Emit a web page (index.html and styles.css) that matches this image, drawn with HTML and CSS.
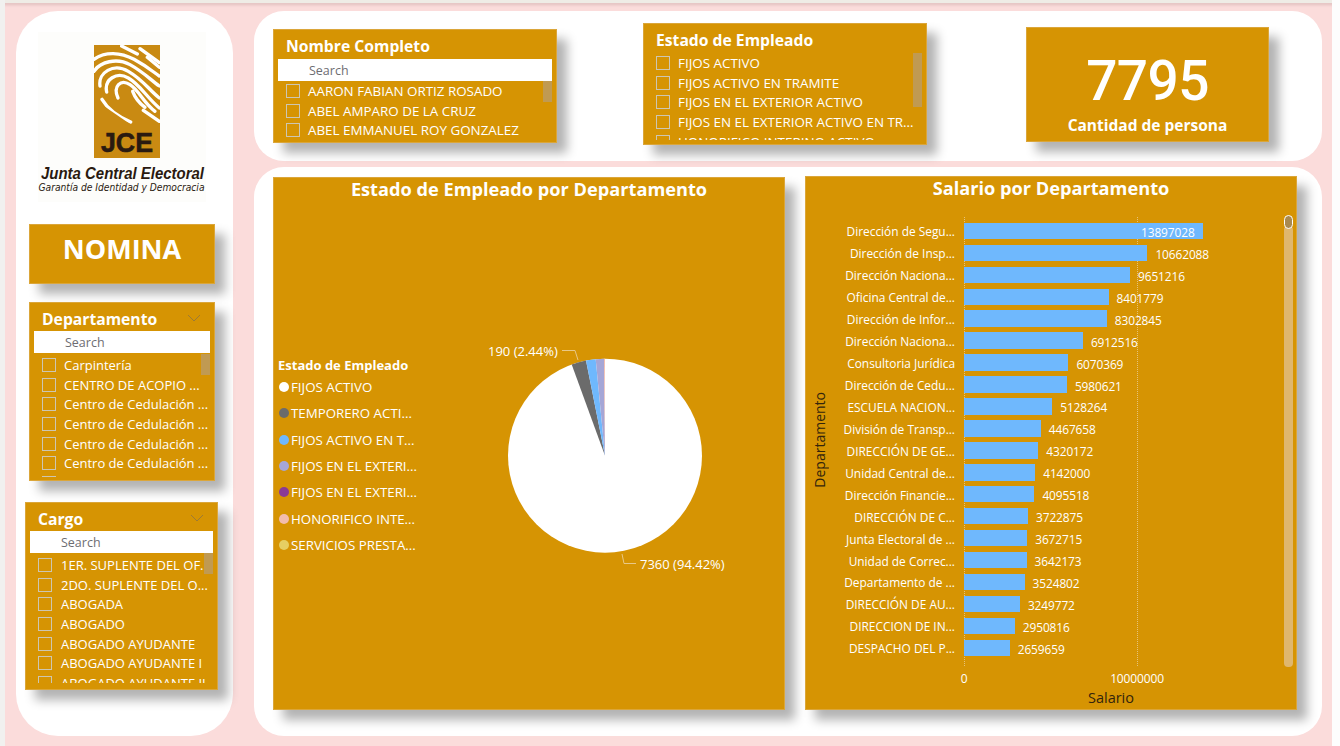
FILE: index.html
```html
<!DOCTYPE html>
<html lang="es">
<head>
    <meta charset="UTF-8">
    <title>Nomina JCE</title>
    <link rel="stylesheet" href="styles.css">
</head>
<body>
    <div class="topStrip"></div>
    <div class="page">

        <aside class="panel sidePanel">
            <svg class="logo" width="168" height="170" viewBox="0 0 168 170">
                <rect width="168" height="170" fill="#fdfdfb"/>
                <rect x="56" y="13" width="66" height="113" fill="#c98a12"/>
                <clipPath id="logoClip"><polygon points="56,13 122,13 122,92 92,92 60,70 56,60"/></clipPath>
                <g clip-path="url(#logoClip)">
                    <g transform="translate(52 10) scale(.3333)" fill="none" stroke="#fff" stroke-width="10" stroke-linecap="round">
                        <path d="M12 52C45 28 92 30 132 52S190 90 208 102"/>
                        <path d="M12 88C30 60 80 46 120 68S185 116 208 132"/>
                        <path d="M30 132C24 92 70 62 115 88S175 142 208 168"/>
                        <path d="M50 150C42 112 80 88 115 108S170 166 208 198"/>
                        <path d="M84 168C68 132 92 110 120 128S160 182 195 208"/>
                        <path d="M36 172C50 196 80 222 122 240"/>
                        <path d="M128 148C136 170 150 185 165 196"/>
                        <path d="M160 205L208 238"/>
                        <path d="M95 12L142 36"/>
                        <path d="M150 20L208 62"/>
                        <path d="M172 46L208 76"/>
                    </g>
                </g>
                <text class="logoJce" x="89" y="120" text-anchor="middle" textLength="52" lengthAdjust="spacingAndGlyphs">JCE</text>
                <text class="logoName" x="3" y="147" textLength="163" lengthAdjust="spacingAndGlyphs">Junta Central Electoral</text>
                <text class="logoTag" x="0.500" y="159" textLength="166" lengthAdjust="spacingAndGlyphs">Garantía de Identidad y Democracia</text>
            </svg>

            <div class="card nominaCard">NOMINA</div>

            <section class="card slicer deptSlicer">
                <div class="slicerHead">
                    <span class="slicerTitle">Departamento</span>
                    <svg class="chevron" width="14" height="8" viewBox="0 0 14 8"><path d="M1 1l6 6 6-6" fill="none" stroke="#9c7a35" stroke-width="1"/></svg>
                </div>
                <div class="searchBox">Search</div>
                <ul class="slicerList">
                    <li><i></i>Carpintería</li>
                    <li><i></i>CENTRO DE ACOPIO ...</li>
                    <li><i></i>Centro de Cedulación ...</li>
                    <li><i></i>Centro de Cedulación ...</li>
                    <li><i></i>Centro de Cedulación ...</li>
                    <li><i></i>Centro de Cedulación ...</li>
                    <li><i></i>Centro de Cedulación ...</li>
                </ul>
                <div class="scrollThumb"></div>
            </section>

            <section class="card slicer cargoSlicer">
                <div class="slicerHead">
                    <span class="slicerTitle">Cargo</span>
                    <svg class="chevron" width="14" height="8" viewBox="0 0 14 8"><path d="M1 1l6 6 6-6" fill="none" stroke="#9c7a35" stroke-width="1"/></svg>
                </div>
                <div class="searchBox">Search</div>
                <ul class="slicerList">
                    <li><i></i>1ER. SUPLENTE DEL OF...</li>
                    <li><i></i>2DO. SUPLENTE DEL O...</li>
                    <li><i></i>ABOGADA</li>
                    <li><i></i>ABOGADO</li>
                    <li><i></i>ABOGADO AYUDANTE</li>
                    <li><i></i>ABOGADO AYUDANTE I</li>
                    <li><i></i>ABOGADO AYUDANTE II</li>
                </ul>
                <div class="scrollThumb"></div>
            </section>
        </aside>

        <main class="mainColumn">
            <section class="panel topPanel">
                <div class="card slicer nameSlicer">
                    <div class="slicerHead">
                        <span class="slicerTitle">Nombre Completo</span>
                    </div>
                    <div class="searchBox">Search</div>
                    <ul class="slicerList">
                        <li><i></i>AARON FABIAN ORTIZ ROSADO</li>
                        <li><i></i>ABEL AMPARO DE LA CRUZ</li>
                        <li><i></i>ABEL EMMANUEL ROY GONZALEZ</li>
                    </ul>
                    <div class="scrollThumb"></div>
                </div>

                <div class="card slicer statusSlicer">
                    <div class="slicerHead">
                        <span class="slicerTitle">Estado de Empleado</span>
                    </div>
                    <ul class="slicerList">
                        <li><i></i>FIJOS ACTIVO</li>
                        <li><i></i>FIJOS ACTIVO EN TRAMITE</li>
                        <li><i></i>FIJOS EN EL EXTERIOR ACTIVO</li>
                        <li><i></i>FIJOS EN EL EXTERIOR ACTIVO EN TR...</li>
                        <li><i></i>HONORIFICO INTERINO ACTIVO</li>
                    </ul>
                    <div class="scrollThumb"></div>
                </div>

                <div class="card countCard">
                    <div class="countValue">7795</div>
                    <div class="countLabel">Cantidad de persona</div>
                </div>
            </section>

            <section class="panel bottomPanel">
                <div class="card pieCard">
                    <h2 class="chartTitle">Estado de Empleado por Departamento</h2>
                    <div class="pieBody">
                        <div class="legend">
                            <div class="legendTitle">Estado de Empleado</div>
                            <div class="legendItem"><i class="dot dotWhite"></i>FIJOS ACTIVO</div>
                            <div class="legendItem"><i class="dot dotGray"></i>TEMPORERO ACTI...</div>
                            <div class="legendItem"><i class="dot dotBlue"></i>FIJOS ACTIVO EN T...</div>
                            <div class="legendItem"><i class="dot dotLavender"></i>FIJOS EN EL EXTERI...</div>
                            <div class="legendItem"><i class="dot dotPurple"></i>FIJOS EN EL EXTERI...</div>
                            <div class="legendItem"><i class="dot dotSalmon"></i>HONORIFICO INTE...</div>
                            <div class="legendItem"><i class="dot dotYellow"></i>SERVICIOS PRESTA...</div>
                        </div>
                        <svg class="pie" width="300" height="250" viewBox="0 0 300 250">
                            <g transform="translate(145 125.7)">
                                <circle r="97" fill="#fff"/>
                                <path d="M0 0L-33.3 -91.1A97 97 0 0 1 -19 -95.1Z" fill="#6b6b6b"/>
                                <path d="M0 0L-19 -95.1A97 97 0 0 1 -9.3 -96.5Z" fill="#6fb8fd"/>
                                <path d="M0 0L-9.3 -96.5A97 97 0 0 1 -1 -97Z" fill="#a5a6d6"/>
                                <path d="M0 0L-1 -97A97 97 0 0 1 0 -97Z" fill="#f2bcae"/>
                            </g>
                            <path class="leader" d="M102 20.5H115L118 30"/>
                            <path class="leader" d="M162 224L164 233.5H176"/>
                            <text class="pieLabel" x="28" y="25.500">190 (2.44%)</text>
                            <text class="pieLabel" x="180" y="238.500">7360 (94.42%)</text>
                        </svg>
                    </div>
                </div>

                <div class="card barCard">
                    <h2 class="chartTitle">Salario por Departamento</h2>
                    <div class="axisY">Departamento</div>
                    <div class="gridLine gridZero"></div>
                    <div class="gridLine gridTen"></div>
                    <div class="barRows">
                        <div class="barRow"><span class="barName">Dirección de Segu...</span><div class="bar" style="width:239px"></div><span class="barValue insideBar">13897028</span></div>
                        <div class="barRow"><span class="barName">Dirección de Insp...</span><div class="bar" style="width:183.4px"></div><span class="barValue">10662088</span></div>
                        <div class="barRow"><span class="barName">Dirección Naciona...</span><div class="bar" style="width:166px"></div><span class="barValue">9651216</span></div>
                        <div class="barRow"><span class="barName">Oficina Central de...</span><div class="bar" style="width:144.5px"></div><span class="barValue">8401779</span></div>
                        <div class="barRow"><span class="barName">Dirección de Infor...</span><div class="bar" style="width:142.8px"></div><span class="barValue">8302845</span></div>
                        <div class="barRow"><span class="barName">Dirección Naciona...</span><div class="bar" style="width:118.9px"></div><span class="barValue">6912516</span></div>
                        <div class="barRow"><span class="barName">Consultoria Jurídica</span><div class="bar" style="width:104.4px"></div><span class="barValue">6070369</span></div>
                        <div class="barRow"><span class="barName">Dirección de Cedu...</span><div class="bar" style="width:102.9px"></div><span class="barValue">5980621</span></div>
                        <div class="barRow"><span class="barName">ESCUELA NACION...</span><div class="bar" style="width:88.2px"></div><span class="barValue">5128264</span></div>
                        <div class="barRow"><span class="barName">División de Transp...</span><div class="bar" style="width:76.8px"></div><span class="barValue">4467658</span></div>
                        <div class="barRow"><span class="barName">DIRECCIÓN DE GE...</span><div class="bar" style="width:74.3px"></div><span class="barValue">4320172</span></div>
                        <div class="barRow"><span class="barName">Unidad Central de...</span><div class="bar" style="width:71.2px"></div><span class="barValue">4142000</span></div>
                        <div class="barRow"><span class="barName">Dirección Financie...</span><div class="bar" style="width:70.4px"></div><span class="barValue">4095518</span></div>
                        <div class="barRow"><span class="barName">DIRECCIÓN DE C...</span><div class="bar" style="width:64px"></div><span class="barValue">3722875</span></div>
                        <div class="barRow"><span class="barName">Junta Electoral de ...</span><div class="bar" style="width:63.2px"></div><span class="barValue">3672715</span></div>
                        <div class="barRow"><span class="barName">Unidad de Correc...</span><div class="bar" style="width:62.6px"></div><span class="barValue">3642173</span></div>
                        <div class="barRow"><span class="barName">Departamento de ...</span><div class="bar" style="width:60.6px"></div><span class="barValue">3524802</span></div>
                        <div class="barRow"><span class="barName">DIRECCIÓN DE AU...</span><div class="bar" style="width:55.9px"></div><span class="barValue">3249772</span></div>
                        <div class="barRow"><span class="barName">DIRECCION DE IN...</span><div class="bar" style="width:50.8px"></div><span class="barValue">2950816</span></div>
                        <div class="barRow"><span class="barName">DESPACHO DEL P...</span><div class="bar" style="width:45.7px"></div><span class="barValue">2659659</span></div>
                    </div>
                    <div class="axisX">
                        <span class="tick tickZero">0</span>
                        <span class="tick tickTen">10000000</span>
                    </div>
                    <div class="axisXTitle">Salario</div>
                    <div class="chartScroll"><div class="chartHandle"></div></div>
                </div>
            </section>
        </main>
    </div>
</body>
</html>
```

FILE: styles.css
```css
* {box-sizing: border-box}
html, body {
    height: 746px;
    overflow: hidden;
}
body {
    margin: 0;
    font-family: "Open Sans", "Noto Sans", sans-serif;
    background-color: #fbdcdb;
    border-left: 5px solid #f1f1ef;
    border-right: 8px solid #fdfdfd;
    color: #fff;
}
.topStrip {
    height: 3px;
    margin: 0 -8px 0 -5px;
    background: #efece6;
    box-shadow: 0 2px 3px rgba(120,80,80,.2);
}
.page {
    display: flex;
    padding: 8px 0 0 11px;
}
.panel {
    background: #fff;
}

/* left column */
.sidePanel {
    width: 217px;
    height: 725px;
    flex: none;
    border-radius: 42px;
    padding-top: 21px;
}
.logo {
    display: block;
    margin-left: 22px;
    overflow: visible;
}
.logoJce {
    font: 800 28px "Liberation Sans", sans-serif;
    fill: #2a1a10;
    stroke: #2a1a10;
    stroke-width: .6;
}
.logoName {
    font: italic 700 16px "Liberation Sans", sans-serif;
    fill: #2a1a10;
}
.logoTag {
    font: italic 400 10.500px "DejaVu Sans", sans-serif;
    fill: #2a1a10;
}
.mainColumn {
    margin-left: 21px;
    width: 1068px;
    display: flex;
    flex-direction: column;
    gap: 6px;
}

/* gold boxes */
.card {
    background-color: #d69403;
    border: 1px solid #dba63a;
    box-shadow: 10px 10px 10px rgba(0,0,0,.3);
    flex: none;
}
.nominaCard {
    width: 186px;
    height: 60px;
    margin: 22px 0 0 13px;
    text-align: center;
    font-size: 27px;
    font-weight: 700;
    line-height: 48px;
}

/* slicers */
.slicer {
    position: relative;
    overflow: visible;
}
.slicerHead {
    display: flex;
    justify-content: space-between;
    align-items: center;
    font-size: 15.700px;
    font-weight: 700;
    line-height: 22px;
    margin-bottom: 1px;
}
.slicerTitle {
    white-space: nowrap;
}
.chevron {
    margin-top: -2px;
}
.searchBox {
    background: #fff;
    color: #6d6d72;
    font-size: 12.500px;
    line-height: 23px;
    height: 22px;
    padding-left: 31px;
}
.slicerList {
    list-style-type: none;
    margin: 0;
    padding: 0;
    overflow: hidden;
    font-size: 13px;
}
.slicerList li {
    display: flex;
    align-items: center;
    height: 19.7px;
    white-space: nowrap;
}
.slicerList i {
    width: 14px;
    height: 14px;
    flex: none;
    margin-right: 8px;
    border: 1px solid #cdc6b2;
}
.scrollThumb {
    position: absolute;
    width: 9px;
    height: 21px;
    background: #c09a52;
}
.deptSlicer {
    width: 186px;
    height: 179px;
    margin: 18px 0 0 13px;
    padding: 5px 4px 0;
}
.deptSlicer .slicerHead {
    padding: 0 9px 0 8px;
}
.deptSlicer .slicerList {
    height: 122px;
    margin-top: 2px;
    padding-left: 8px;
}
.deptSlicer .scrollThumb {
    top: 51px;
    right: 4px;
}
.cargoSlicer {
    width: 193px;
    height: 188px;
    margin: 21px 0 0 9px;
    padding: 5px 4px 0;
}
.cargoSlicer .slicerHead {
    padding: 0 9px 0 8px;
}
.cargoSlicer .slicerList {
    height: 128px;
    margin-top: 2px;
    padding-left: 8px;
}
.cargoSlicer .slicerList i {
    margin-right: 9px;
}
.cargoSlicer .scrollThumb {
    top: 50px;
    right: 4px;
}
.topPanel {
    height: 150px;
    border-radius: 30px;
    display: flex;
    align-items: flex-start;
    padding-left: 19px;
}
.nameSlicer {
    width: 284px;
    height: 114px;
    margin-top: 18px;
    padding: 5px 4px 0;
}
.nameSlicer .slicerHead {
    padding-left: 8px;
    margin-bottom: 2px;
}
.nameSlicer .slicerList {
    height: 60px;
    font-size: 13.400px;
    padding-left: 8px;
}
.nameSlicer .scrollThumb {
    top: 51px;
    right: 4px;
}
.statusSlicer {
    width: 284px;
    height: 122px;
    margin: 12px 0 0 86px;
    padding: 5px 4px 0 12px;
}
.statusSlicer .slicerList {
    height: 87px;
    margin-top: 2px;
    font-size: 13.400px;
}
.statusSlicer .scrollThumb {
    top: 29px;
    right: 4px;
    height: 54px;
}
.countCard {
    width: 243px;
    height: 115px;
    margin: 16px 0 0 99px;
    text-align: center;
}
.countValue {
    font-family: Roboto, sans-serif;
    font-size: 55px;
    font-weight: 500;
    line-height: 60px;
    margin-top: 23px;
    letter-spacing: -.6px;
}
.countLabel {
    font-size: 15.500px;
    font-weight: 700;
    line-height: 20px;
    margin-top: 4px;
}

/* bottom panel */
.bottomPanel {
    height: 569px;
    border-radius: 30px;
    display: flex;
    align-items: flex-start;
    padding-left: 19px;
}
.chartTitle {
    margin: -1px 0 0;
    font-size: 18.200px;
    font-weight: 700;
    line-height: 24px;
    text-align: center;
}
.pieCard {
    width: 512px;
    height: 533px;
    margin-top: 10px;
}
.pieBody {
    display: flex;
    padding: 129px 0 0 4px;
}
.legend {
    width: 182px;
    padding-top: 26px;
    font-size: 13.300px;
}
.legendTitle {
    font-size: 13px;
    font-weight: 700;
    line-height: 18px;
}
.legendItem {
    display: flex;
    align-items: center;
    height: 26.300px;
    white-space: nowrap;
}
.dot {
    width: 10px;
    height: 10px;
    margin: 0 2px 0 1px;
    border-radius: 50%;
    flex: none;
}
.dotWhite {background: #fff}
.dotGray {background: #6b6b6b}
.dotBlue {background: #6fb8fd}
.dotLavender {background: #a5a6d6}
.dotPurple {background: #8a3a94}
.dotSalmon {background: #f2bcae}
.dotYellow {background: #e6ce62}
.pie {
    display: block;
    flex: none;
}
.leader {
    fill: none;
    stroke: #e8c888;
    stroke-width: 1;
}
.pieLabel {
    font-size: 13px;
    fill: #fff;
}

/* bar chart */
.barCard {
    position: relative;
    width: 492px;
    height: 534px;
    margin: 9px 0 0 20px;
}
.barRows {
    padding-top: 20px;
}
.barRow {
    display: flex;
    align-items: center;
    height: 21.950px;
    position: relative;
    font-size: 11.900px;
    white-space: nowrap;
}
.barName {
    width: 149px;
    text-align: right;
    margin-right: 9px;
    position: relative;
    top: .5px;
}
.bar {
    height: 16.500px;
    background: #6fb8fd;
}
.barValue {
    margin-left: 8px;
    position: relative;
    top: 1px;
    letter-spacing: -.1px;
}
.insideBar {
    margin-left: -62px;
}
.gridLine {
    position: absolute;
    top: 40px;
    height: 449px;
    border-left: 1px dotted #e6c27a;
}
.gridZero {
    left: 158px;
}
.gridTen {
    left: 331px;
}
.axisY {
    position: absolute;
    left: 4px;
    top: 215px;
    writing-mode: vertical-rl;
    transform: rotate(180deg);
    font-size: 14px;
    color: #33240c;
}
.axisX {
    position: relative;
    height: 19px;
    margin-top: 11px;
    font-size: 12px;
    letter-spacing: -.15px;
}
.tick {
    position: absolute;
    top: 0;
    transform: translateX(-50%);
}
.tickZero {
    left: 158px;
}
.tickTen {
    left: 331px;
}
.axisXTitle {
    margin: 0 0 0 245px;
    width: 120px;
    text-align: center;
    font-size: 14.500px;
    color: #33240c;
    line-height: 18px;
}
.chartScroll {
    position: absolute;
    top: 49px;
    left: 478px;
    width: 9px;
    height: 441px;
    background: #dfb76f;
    border-radius: 4px;
}
.chartHandle {
    position: absolute;
    top: -11px;
    left: 0;
    width: 9px;
    height: 14px;
    background: #a98a4f;
    border: 1px solid #fff;
    border-radius: 5px;
}
```
